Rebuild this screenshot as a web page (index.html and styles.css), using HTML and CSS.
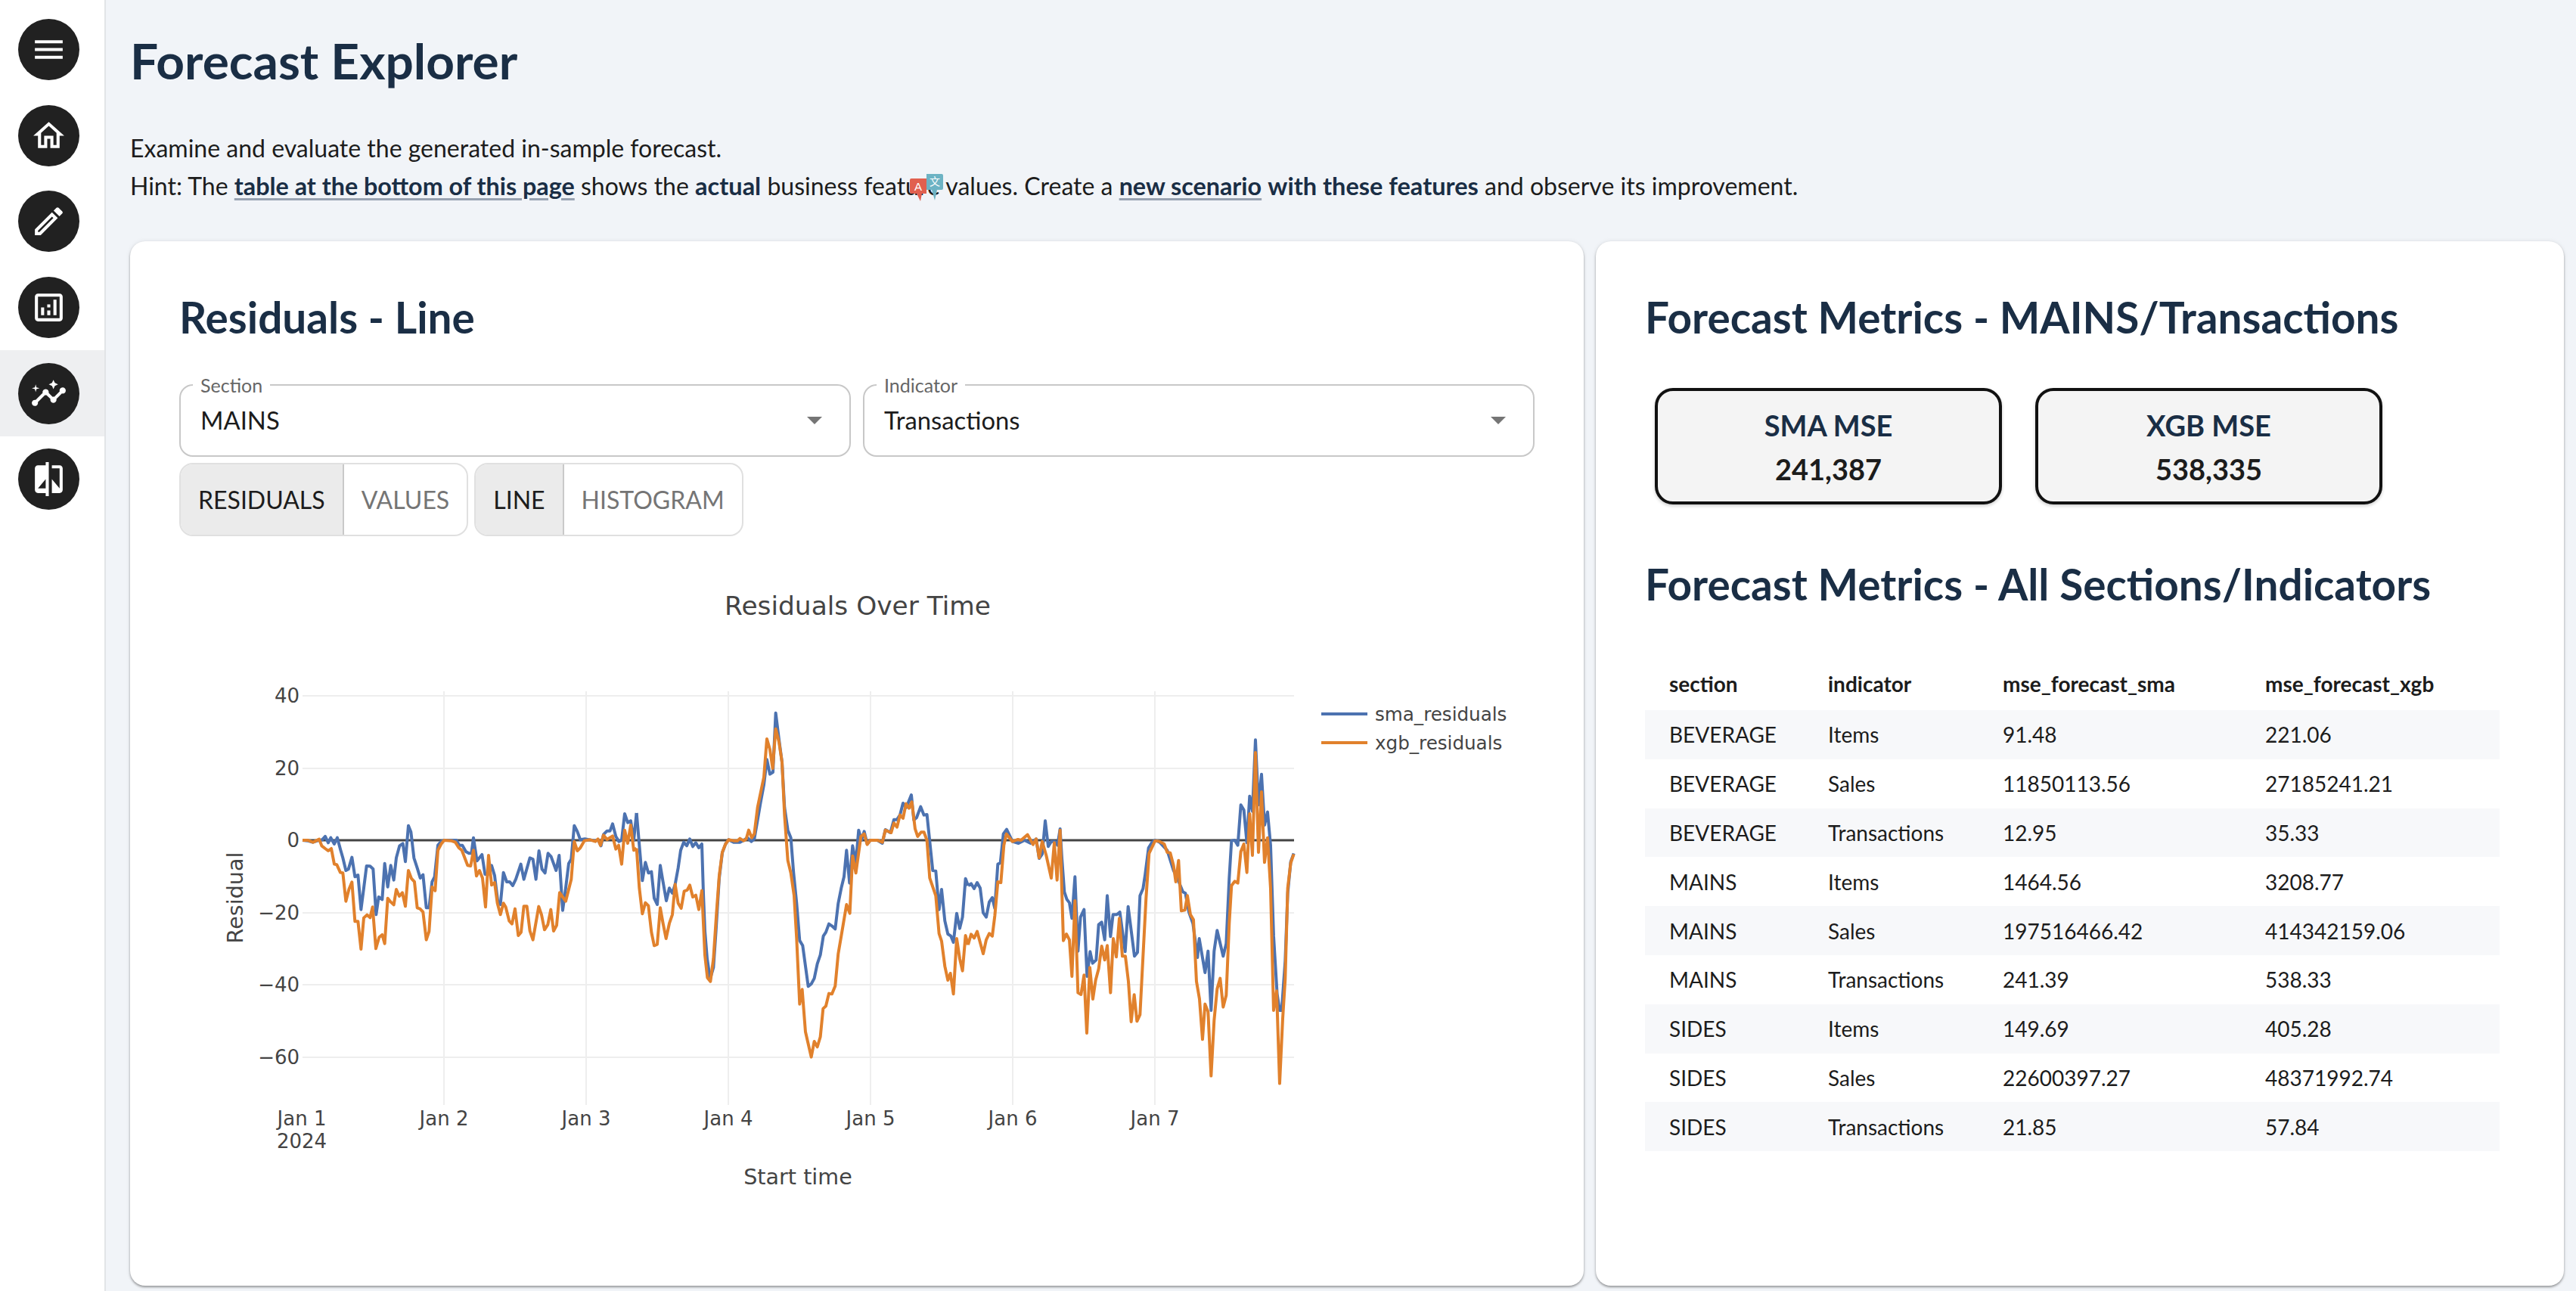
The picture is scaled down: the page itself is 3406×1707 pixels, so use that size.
FILE: index.html
```html
<!DOCTYPE html>
<html>
<head>
  <link rel="stylesheet" href="styles.css">
  <meta charset="UTF-8">
  <title>Forecast Explorer</title>
</head>
<body>
  <nav class="sidebar">
    <a class="nav-item"><span class="nav-circle"><svg viewBox="0 0 24 24"><path d="M3 18h18v-2H3v2zm0-5h18v-2H3v2zm0-7v2h18V6H3z"/></svg></span></a>
    <a class="nav-item"><span class="nav-circle"><svg viewBox="0 0 24 24"><path d="M12 5.69l5 4.5V18h-2v-6H9v6H7v-7.81l5-4.5M12 3L2 12h3v8h6v-6h2v6h6v-8h3L12 3z"/></svg></span></a>
    <a class="nav-item"><span class="nav-circle"><svg viewBox="0 0 24 24"><path d="M14.06 9.02l.92.92L5.92 19H5v-.92l9.06-9.06M17.66 3c-.25 0-.51.1-.7.29l-1.83 1.83 3.75 3.75 1.83-1.83c.39-.39.39-1.02 0-1.41l-2.34-2.34c-.2-.2-.45-.29-.71-.29zm-3.6 3.19L3 17.25V21h3.75L17.81 9.94l-3.75-3.75z"/></svg></span></a>
    <a class="nav-item"><span class="nav-circle"><svg viewBox="0 0 24 24"><path d="M19 3H5c-1.1 0-2 .9-2 2v14c0 1.1.9 2 2 2h14c1.1 0 2-.9 2-2V5c0-1.1-.9-2-2-2zm0 16H5V5h14v14zM7 12h2v5H7zm8-5h2v10h-2zm-4 7h2v3h-2zm0-4h2v2h-2z"/></svg></span></a>
    <a class="nav-item active"><span class="nav-circle"><svg viewBox="0 0 24 24"><path d="M21 8c-1.45 0-2.26 1.44-1.93 2.51l-3.55 3.56c-.3-.09-.74-.09-1.04 0l-2.55-2.55C12.27 10.45 11.46 9 10 9c-1.45 0-2.27 1.44-1.93 2.52l-4.56 4.55C2.44 15.74 1 16.55 1 18c0 1.1.9 2 2 2 1.45 0 2.26-1.44 1.93-2.51l4.55-4.56c.3.09.74.09 1.04 0l2.55 2.55C12.73 16.55 13.54 18 15 18c1.45 0 2.27-1.44 1.93-2.52l3.56-3.55c1.07.33 2.51-.48 2.51-1.93 0-1.1-.9-2-2-2z"/><path d="M15 9l.94-2.07L18 6l-2.06-.93L15 3l-.92 2.07L12 6l2.08.93z"/><path d="M3.5 11L4 9l2-.5L4 8l-.5-2L3 8l-2 .5L3 9z"/></svg></span></a>
    <a class="nav-item"><span class="nav-circle"><svg viewBox="0 0 24 24"><path d="M10 3H5c-1.1 0-2 .9-2 2v14c0 1.1.9 2 2 2h5v2h2V1h-2v2zm0 15H5l5-6v6zm9-15h-5v2h5v13l-5-6v9h5c1.1 0 2-.9 2-2V5c0-1.1-.9-2-2-2z"/></svg></span></a>
  </nav>

  <main class="content">
    <h1>Forecast Explorer</h1>
    <p class="intro">
      Examine and evaluate the generated in-sample forecast.<br>
      Hint: The <a class="link">table at the bottom of this page</a> shows the <b>actual</b> business feat<span class="translate-anchor"><svg class="translate-icon" viewBox="0 0 44 36">
        <path fill="#6db3c4" d="M22 0h20q2 0 2 2v17q0 2-2 2h-6l-3 14-4-14h-7z"/>
        <path fill="#e1604f" d="M2 6h20v20h-6l-2 10-5-10H2q-2 0-2-2V8q0-2 2-2z"/>
        <text class="translate-a" x="11" y="22">A</text>
        <text class="translate-x" x="33" y="15">文</text>
      </svg></span>ure values. Create a <a class="link">new scenario</a> <b>with these features</b> and observe its improvement.
    </p>

    <div class="cards">
      <section class="card card-left">
        <h2>Residuals - Line</h2>
        <div class="select-row">
          <fieldset class="select">
            <legend>Section</legend>
            <span class="select-value">MAINS</span>
            <span class="select-arrow"></span>
          </fieldset>
          <fieldset class="select">
            <legend>Indicator</legend>
            <span class="select-value">Transactions</span>
            <span class="select-arrow"></span>
          </fieldset>
        </div>
        <div class="toggle-row">
          <div class="toggle">
            <span class="toggle-btn on">Residuals</span>
            <span class="toggle-btn">Values</span>
          </div>
          <div class="toggle">
            <span class="toggle-btn on">Line</span>
            <span class="toggle-btn">Histogram</span>
          </div>
        </div>

        <!-- viewBox uses page pixels so the trace coordinates stay readable -->
        <svg class="chart" viewBox="237 720 1792 880">
          <text class="chart-title" x="1134" y="812">Residuals Over Time</text>

          <g class="grid">
            <line x1="400" x2="1711" y1="919" y2="919"/>
            <line x1="400" x2="1711" y1="1015" y2="1015"/>
            <line x1="400" x2="1711" y1="1206" y2="1206"/>
            <line x1="400" x2="1711" y1="1301" y2="1301"/>
            <line x1="400" x2="1711" y1="1397" y2="1397"/>
            <line x1="587" x2="587" y1="913" y2="1460"/>
            <line x1="775" x2="775" y1="913" y2="1460"/>
            <line x1="963" x2="963" y1="913" y2="1460"/>
            <line x1="1151" x2="1151" y1="913" y2="1460"/>
            <line x1="1339" x2="1339" y1="913" y2="1460"/>
            <line x1="1527" x2="1527" y1="913" y2="1460"/>
          </g>
          <line class="zero" x1="400" x2="1711" y1="1110" y2="1110"/>

          <g class="ticks-y">
            <text x="396" y="928">40</text>
            <text x="396" y="1024">20</text>
            <text x="396" y="1119">0</text>
            <text x="396" y="1215">−20</text>
            <text x="396" y="1310">−40</text>
            <text x="396" y="1406">−60</text>
          </g>
          <g class="ticks-x">
            <text x="399" y="1487">Jan 1</text>
            <text x="399" y="1517">2024</text>
            <text x="587" y="1487">Jan 2</text>
            <text x="775" y="1487">Jan 3</text>
            <text x="963" y="1487">Jan 4</text>
            <text x="1151" y="1487">Jan 5</text>
            <text x="1339" y="1487">Jan 6</text>
            <text x="1527" y="1487">Jan 7</text>
          </g>
          <text class="axis-title" x="1055" y="1565">Start time</text>
          <text class="axis-title" transform="translate(321 1186) rotate(-90)">Residual</text>

          <g transform="translate(400 920) scale(.3333)">
            <polyline class="sma" points="0,570 20,572 40,578 60,572 78,568 90,555 102,580 112,560 126,585 138,560 150,605 160,640 172,690 182,685 196,638 208,715 220,708 232,845 243,760 254,672 268,673 280,684 292,865 302,795 316,805 326,662 338,755 350,670 362,728 372,640 385,592 398,583 408,655 420,512 430,537 442,640 455,680 467,720 478,707 491,838 502,838 514,735 524,715 537,590 550,575 562,570 610,570 622,590 634,590 648,615 660,622 670,622 678,560 692,652 712,627 724,705 736,705 750,670 762,710 775,815 785,825 797,698 810,735 822,735 834,750 846,725 866,665 878,725 902,640 914,645 926,725 938,612 950,685 962,700 974,622 986,635 1006,690 1018,630 1032,848 1044,760 1056,662 1066,645 1078,512 1090,535 1102,568 1120,565 1160,572 1172,568 1184,592 1194,547 1208,533 1220,533 1230,505 1243,555 1255,575 1266,570 1278,465 1290,500 1302,493 1314,570 1325,462"/>
          </g>
          <g transform="translate(840 920) scale(.3333)">
            <polyline class="sma" points="5,462 28,730 40,658 52,700 64,695 75,800 87,825 99,670 110,735 123,810 135,760 147,780 158,745 170,680 180,610 192,578 204,592 216,565 228,595 240,580 252,600 264,585 270,780 276,930 285,1040 297,1120 310,1075 320,930 333,720 345,620 358,585 370,568 390,578 415,578 430,570 445,560 460,575 472,565 485,490 497,420 510,350 522,250 534,308 546,300 557,65 570,170 582,260 592,440 605,530 617,560 628,700 640,820 652,968 664,988 686,1150 698,1140 710,1118 722,1060 734,1025 746,950 756,935 768,902 780,910 793,922 805,820 817,760 828,715 838,610 850,740 862,592 875,660 886,530 897,570 908,535 920,585 932,570 960,570 980,582 992,528 1012,540 1026,488 1038,488 1050,470 1062,423 1075,440 1095,390 1105,490 1116,480 1132,437 1145,470 1157,468 1180,690 1192,692 1205,845 1215,765 1228,890 1240,942 1252,950 1262,975 1275,860 1287,920 1298,875 1310,722 1320,750"/>
          </g>
          <g transform="translate(1280 920) scale(.3333)">
            <polyline class="sma" points="0,750 12,742 24,762 36,738 48,760 60,858 72,875 84,815 96,798 106,840 118,665 128,660 140,545 153,527 176,575 200,582 224,570 248,582 270,565 282,642 294,625 306,493 318,595 330,575 345,575 355,590 365,525 372,640 382,775 392,805 402,818 412,880 424,715 436,1010 446,875 460,845 472,1110 484,1012 494,1058 508,1045 518,905 530,895 542,965 552,790 565,952 575,865 590,865 602,855 623,1012 635,833 660,1030 672,1015 682,790 694,762 702,710 716,600 730,578 742,570 760,578 790,610 815,690 830,720 852,775 862,780 876,855 892,900 910,1035 917,960 940,1095 952,1010 964,1245 976,1010 988,928 1012,1030 1024,980 1036,720 1045,572 1058,570 1070,590 1082,430 1094,450 1106,580 1117,395 1128,455 1140,172 1152,430 1164,308 1176,510 1188,458 1200,590 1212,950 1226,1180 1236,1245 1244,1245 1258,1050 1268,780 1280,655 1292,622"/>
          </g>
          <g transform="translate(400 920) scale(.3333)">
            <polyline class="xgb" points="0,570 20,570 42,578 66,566 76,592 90,603 102,612 114,603 126,665 136,667 150,698 160,700 172,812 184,765 196,736 208,892 220,892 232,1002 243,878 256,866 268,877 278,835 291,1000 304,955 316,945 326,980 338,800 350,815 362,826 372,765 384,792 396,778 408,832 420,690 432,722 444,735 455,838 466,842 478,855 491,965 502,932 514,755 526,770 537,610 550,585 562,570 590,572 606,578 620,600 632,610 655,670 667,672 678,610 690,712 702,690 714,720 726,835 738,630 750,748 762,738 773,820 785,865 797,820 806,835 820,890 831,902 843,842 856,948 867,935 878,832 890,832 902,930 914,965 937,833 948,865 960,925 973,905 985,845 996,930 1008,908 1020,778 1032,795 1044,812 1066,725 1078,575 1090,612 1102,600 1118,572 1140,568 1162,575 1172,565 1182,590 1194,550 1208,567 1230,553 1243,605 1254,590 1266,665 1278,530 1290,582 1302,510 1314,610 1325,602"/>
          </g>
          <g transform="translate(840 920) scale(.3333)">
            <polyline class="xgb" points="5,602 16,760 28,862 40,818 52,830 64,935 75,988 87,983 99,838 110,900 122,960 135,900 147,865 158,745 170,820 182,840 194,772 206,768 216,748 228,795 240,788 252,845 264,770 276,1025 286,1115 298,1130 310,1040 322,860 333,710 345,618 358,585 370,568 390,572 405,572 415,563 430,572 440,565 450,530 462,560 472,545 485,440 510,320 522,168 534,210 545,285 557,128 570,180 582,260 592,470 605,650 617,700 630,790 640,960 652,1220 662,1162 675,1330 698,1430 710,1368 722,1390 734,1350 745,1238 756,1228 768,1178 780,1180 793,1148 805,1020 817,950 838,825 851,860 862,632 875,700 895,555 908,545 920,587 932,570 960,570 980,578 992,530 1015,540 1026,502 1038,518 1050,470 1062,483 1074,425 1086,443 1097,418 1110,525 1120,555 1134,538 1145,538 1157,570 1168,720 1192,790 1205,940 1215,970 1228,1070 1240,1125 1250,1098 1262,1180 1275,960 1287,1040 1298,1088 1310,948 1320,985"/>
          </g>
          <g transform="translate(1280 920) scale(.3333)">
            <polyline class="xgb" points="0,985 12,943 24,958 36,932 60,1020 72,965 84,940 96,950 106,870 118,735 130,738 142,590 152,545 176,575 198,567 210,570 236,548 258,587 270,565 282,640 294,575 310,630 330,720 342,580 353,728 365,530 378,968 390,942 402,965 412,1110 424,810 436,1175 448,1182 460,1105 471,1335 483,1075 495,1200 506,1125 518,1080 530,990 542,1045 552,988 565,1175 576,960 588,1033 600,880 612,1030 624,1030 636,1130 647,1290 659,1183 670,1288 682,1262 694,1030 706,800 718,622 742,572 760,575 778,585 790,618 802,620 815,670 824,735 835,650 846,850 860,847 870,790 882,865 894,885 906,1130 918,1200 930,1360 940,1220 952,1250 964,1505 976,1285 988,1160 1000,1118 1012,1232 1024,1185 1036,900 1045,750 1058,733 1070,740 1082,615 1094,585 1106,698 1117,465 1128,630 1140,222 1152,618 1164,378 1176,658 1188,560 1200,760 1212,1245 1224,1168 1236,1535 1248,1280 1258,1120 1268,760 1280,660 1292,625"/>
          </g>

          <line class="sma" x1="1747" x2="1808" y1="943" y2="943"/>
          <line class="xgb" x1="1747" x2="1808" y1="981" y2="981"/>
          <text class="legend" x="1818" y="952">sma_residuals</text>
          <text class="legend" x="1818" y="990">xgb_residuals</text>
        </svg>
      </section>

      <section class="card card-right">
        <h2>Forecast Metrics - MAINS/Transactions</h2>
        <div class="kpis">
          <div class="kpi"><div class="kpi-label">SMA MSE</div><div class="kpi-value">241,387</div></div>
          <div class="kpi"><div class="kpi-label">XGB MSE</div><div class="kpi-value">538,335</div></div>
        </div>
        <h2 class="second">Forecast Metrics - All Sections/Indicators</h2>
        <table class="metrics">
          <thead>
            <tr><th class="c1">section</th><th class="c2">indicator</th><th class="c3">mse_forecast_sma</th><th class="c4">mse_forecast_xgb</th></tr>
          </thead>
          <tbody>
            <tr><td>BEVERAGE</td><td>Items</td><td>91.48</td><td>221.06</td></tr>
            <tr><td>BEVERAGE</td><td>Sales</td><td>11850113.56</td><td>27185241.21</td></tr>
            <tr><td>BEVERAGE</td><td>Transactions</td><td>12.95</td><td>35.33</td></tr>
            <tr><td>MAINS</td><td>Items</td><td>1464.56</td><td>3208.77</td></tr>
            <tr><td>MAINS</td><td>Sales</td><td>197516466.42</td><td>414342159.06</td></tr>
            <tr><td>MAINS</td><td>Transactions</td><td>241.39</td><td>538.33</td></tr>
            <tr><td>SIDES</td><td>Items</td><td>149.69</td><td>405.28</td></tr>
            <tr><td>SIDES</td><td>Sales</td><td>22600397.27</td><td>48371992.74</td></tr>
            <tr><td>SIDES</td><td>Transactions</td><td>21.85</td><td>57.84</td></tr>
          </tbody>
        </table>
      </section>
    </div>
  </main>
</body>
</html>
```

FILE: styles.css
```css
* {
  box-sizing: border-box;
}

html, body {
  height: 100%;
}

body {
  margin: 0;
  display: flex;
  overflow: hidden;
  background-color: #f1f4f8;
  color: #1c1c1c;
  font-family: Lato, "Liberation Sans", sans-serif;
  font-size: 32px;
}

/* sidebar */
.sidebar {
  flex: 0 0 140px;
  padding-top: 9px;
  background-color: #fff;
  border-right: 2px solid #e2e4e7;
}

.nav-item {
  display: flex;
  align-items: center;
  justify-content: center;
  height: 113.6px;
  padding-right: 9px;
}

.nav-item.active {
  background-color: #eeeff1;
}

.nav-circle {
  display: flex;
  align-items: center;
  justify-content: center;
  width: 81px;
  height: 81px;
  border-radius: 50%;
  background-color: #212121;
}

.nav-circle svg {
  width: 49px;
  height: 49px;
  fill: #fff;
}

/* main column */
.content {
  flex: 1;
  min-width: 0;
  display: flex;
  flex-direction: column;
  padding: 0 16px 7px 32px;
}

h1 {
  margin: 40px 0 0;
  color: #1a2e45;
  font-size: 65.8px;
  line-height: 80px;
  font-weight: 700;
}

.intro {
  margin: 51px 0 0;
  line-height: 50px;
}

.intro b {
  color: #1a2e45;
  font-size: 32.5px;
}

.link {
  color: #1a2e45;
  font-size: 32.3px;
  font-weight: 700;
  text-decoration: underline;
  text-decoration-color: #98a2b1;
  text-decoration-thickness: 3px;
  text-underline-offset: 4px;
}

.translate-anchor {
  position: relative;
}

.translate-icon {
  position: absolute;
  left: 6px;
  top: 4px;
  width: 44px;
  height: 36px;
}

.translate-a {
  fill: #fff;
  font-family: "Liberation Sans", sans-serif;
  font-size: 15px;
  text-anchor: middle;
}

.translate-x {
  fill: #fff;
  font-family: "Noto Sans CJK SC", sans-serif;
  font-size: 14px;
  text-anchor: middle;
}

/* cards */
.cards {
  flex: 1;
  display: flex;
  gap: 16px;
  margin-top: 48px;
  min-height: 0;
}

.card {
  padding: 66px 65px 0;
  background-color: #fff;
  border-radius: 20px;
  box-shadow: 0 2px 3px rgba(0, 0, 0, 0.35), 0 0 6px rgba(0, 0, 0, 0.08);
}

.card-left {
  flex: 0 0 1922px;
}

.card-right {
  flex: 1;
}

h2 {
  margin: 0;
  color: #1a2e45;
  font-size: 56.7px;
  line-height: 68px;
  font-weight: 700;
}

.select-row {
  display: flex;
  gap: 16px;
  margin-top: 42px;
}

.select {
  flex: 1;
  min-width: 0;
  display: flex;
  align-items: center;
  justify-content: space-between;
  margin: 0;
  padding: 14px 36px 27px 26px;
  border: 2px solid #c8c8c8;
  border-radius: 18px;
}

.select legend {
  margin-left: -10px;
  padding: 0 10px;
  color: #666;
  font-size: 25px;
  line-height: 28px;
}

.select-value {
  font-size: 32.8px;
  line-height: 38px;
}

.select-arrow {
  width: 0;
  height: 0;
  border-left: 10px solid transparent;
  border-right: 10px solid transparent;
  border-top: 10px solid #757575;
}

.toggle-row {
  display: flex;
  gap: 8px;
  margin-top: 8px;
}

.toggle {
  display: flex;
  height: 97px;
  border: 2px solid #e0e0e0;
  border-radius: 18px;
  overflow: hidden;
}

.toggle-btn {
  display: flex;
  align-items: center;
  padding: 0 23px;
  color: #757575;
  text-transform: uppercase;
}

.toggle-btn.on {
  background-color: #ebebeb;
  color: #1c1c1c;
  border-right: 2px solid #c9c9c9;
}

/* chart */
.chart {
  display: block;
  width: 1792px;
  height: 880px;
  margin-top: 12px;
  font-family: "DejaVu Sans", sans-serif;
}

.chart text {
  fill: #444;
}

.chart-title {
  font-size: 34.4px;
  text-anchor: middle;
}

.axis-title {
  font-size: 28.6px;
  text-anchor: middle;
}

.ticks-y text {
  font-size: 26px;
  text-anchor: end;
}

.ticks-x text {
  font-size: 26px;
  text-anchor: middle;
}

.legend {
  font-size: 24.6px;
}

.grid line {
  stroke: #eee;
  stroke-width: 2;
}

.zero {
  stroke: #444;
  stroke-width: 3;
}

.sma, .xgb {
  fill: none;
  stroke-width: 4;
  stroke-linejoin: round;
  vector-effect: non-scaling-stroke;
}

.sma {
  stroke: #4c72b0;
}

.xgb {
  stroke: #e1812c;
}

/* metric boxes */
.kpis {
  display: flex;
  gap: 44px;
  margin: 60px 0 0 13px;
}

.kpi {
  width: 459px;
  height: 154px;
  padding-top: 16px;
  background-color: #f4f4f4;
  border: 4px solid #111;
  border-radius: 24px;
  box-shadow: 0 2px 4px rgba(0, 0, 0, 0.2);
  text-align: center;
  font-size: 38px;
  line-height: 58px;
  font-weight: 700;
}

.kpi-label {
  color: #1a2e45;
}

h2.second {
  margin-top: 71px;
}

/* table */
.metrics {
  width: 1130px;
  margin-top: 63px;
  border-collapse: collapse;
  table-layout: fixed;
  font-size: 28px;
}

.metrics th, .metrics td {
  padding: 0 0 0 32px;
  text-align: left;
}

.metrics th {
  height: 70px;
  font-weight: 700;
}

.metrics td {
  height: 64.8px;
}

.metrics tbody tr:nth-child(odd) {
  background-color: #f7f8fa;
}

.c1 { width: 210px; }
.c2 { width: 231px; }
.c3 { width: 347px; }
.c4 { width: 342px; }
```
